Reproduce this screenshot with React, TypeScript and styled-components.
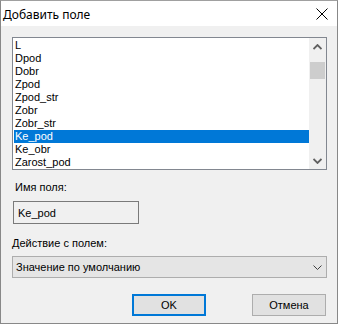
import React from "react";
import styled, { createGlobalStyle } from "styled-components";

const Global = createGlobalStyle`
  html, body { margin: 0; padding: 0; background: #ffffff; }
  body { font-family: "Liberation Sans", Arial, sans-serif; font-size: 11px; color: #000; }
  * { box-sizing: border-box; }
`;

const Window = styled.div`
  width: 338px;
  height: 324px;
  border: 1px solid #888888;
  border-top-color: #a0a0a0;
  display: flex;
  flex-direction: column;
  background: #f0f0f0;
`;

const TitleBar = styled.div`
  height: 25px;
  background: #ffffff;
  display: flex;
  align-items: center;
  justify-content: space-between;
  padding: 0 8px 0 2px;
  font-family: "Noto Sans", "Open Sans", sans-serif;
  font-size: 12px;
  color: #000;
`;

const TitleText = styled.span`
  margin-top: 1px;
`;

const CloseBtn = styled.span`
  display: flex;
  width: 14px;
  height: 14px;
  align-items: center;
  justify-content: center;
`;

const Body = styled.div`
  flex: 1;
  display: flex;
  flex-direction: column;
  padding: 11px 10px 0 11px;
`;

const ListBox = styled.div`
  height: 133px;
  border: 1px solid #828790;
  background: #ffffff;
  display: flex;
  padding-left: 1px;
`;

const Rows = styled.div`
  flex: 1;
  overflow: hidden;
  padding-top: 1px;
`;

const Row = styled.div<{ $sel?: boolean }>`
  height: 13px;
  line-height: 13px;
  padding-left: 1px;
  white-space: nowrap;
  background: ${(p) => (p.$sel ? "#0078d7" : "transparent")};
  color: ${(p) => (p.$sel ? "#ffffff" : "#000000")};
`;

const ScrollBar = styled.div`
  width: 17px;
  background: #f0f0f0;
  display: flex;
  flex-direction: column;
`;

const ArrowBtn = styled.div`
  height: 17px;
  display: flex;
  align-items: center;
  justify-content: center;
`;

const Track = styled.div`
  flex: 1;
  padding-top: 7px;
`;

const Thumb = styled.div`
  height: 17px;
  margin: 0 1px;
  background: #cdcdcd;
`;

const Label = styled.div<{ $indent?: number; $top: number }>`
  height: 13px;
  line-height: 13px;
  margin-top: ${(p) => p.$top}px;
  padding-left: ${(p) => p.$indent ?? 0}px;
`;

const Field = styled.div<{ $top: number }>`
  margin-top: ${(p) => p.$top}px;
`;

const TextBox = styled.div`
  width: 126px;
  height: 23px;
  margin-left: 1px;
  border: 1px solid #7a7a7a;
  background: #f0f0f0;
  display: flex;
  align-items: center;
  padding-left: 4px;
  padding-top: 1px;
`;

const Select = styled.div`
  height: 22px;
  border: 1px solid #adadad;
  background: #e5e5e5;
  display: flex;
  align-items: center;
  justify-content: space-between;
  padding: 0 4px 0 3px;
`;

const ButtonRow = styled.div`
  display: flex;
  justify-content: flex-end;
  gap: 46px;
  padding-right: 1px;
  margin-top: 16px;
`;

const Button = styled.div<{ $default?: boolean }>`
  width: 74px;
  height: 22px;
  background: #e1e1e1;
  border: ${(p) => (p.$default ? "2px solid #0078d7" : "1px solid #adadad")};
  display: flex;
  align-items: center;
  justify-content: center;
`;

const items = [
  "L",
  "Dpod",
  "Dobr",
  "Zpod",
  "Zpod_str",
  "Zobr",
  "Zobr_str",
  "Ke_pod",
  "Ke_obr",
  "Zarost_pod",
];

const Chevron = ({ up }: { up?: boolean }) => (
  <svg width="9" height="6" viewBox="0 0 9 6">
    <path
      d={up ? "M0.5 5 L4.5 1 L8.5 5" : "M0.5 1 L4.5 5 L8.5 1"}
      fill="none"
      stroke="#606060"
      strokeWidth="1.8"
    />
  </svg>
);

export default function App() {
  return (
    <>
      <Global />
      <Window>
        <TitleBar>
          <TitleText>Добавить поле</TitleText>
          <CloseBtn>
            <svg width="12" height="12" viewBox="0 0 12 12">
              <path d="M0.5 0.5 L11.5 11.5 M11.5 0.5 L0.5 11.5" stroke="#000" strokeWidth="1" />
            </svg>
          </CloseBtn>
        </TitleBar>
        <Body>
          <ListBox>
            <Rows>
              {items.map((it) => (
                <Row key={it} $sel={it === "Ke_pod"}>
                  {it}
                </Row>
              ))}
            </Rows>
            <ScrollBar>
              <ArrowBtn>
                <Chevron up />
              </ArrowBtn>
              <Track>
                <Thumb />
              </Track>
              <ArrowBtn>
                <Chevron />
              </ArrowBtn>
            </ScrollBar>
          </ListBox>
          <Label $indent={3} $top={11}>Имя поля:</Label>
          <Field $top={7}>
            <TextBox>Ke_pod</TextBox>
          </Field>
          <Label $top={13}>Действие с полем:</Label>
          <Field $top={6}>
            <Select>
              <span>Значение по умолчанию</span>
              <svg width="9" height="5" viewBox="0 0 9 5">
                <path d="M0.5 0.5 L4.5 4.5 L8.5 0.5" fill="none" stroke="#404040" strokeWidth="1" />
              </svg>
            </Select>
          </Field>
          <ButtonRow>
            <Button $default>OK</Button>
            <Button>Отмена</Button>
          </ButtonRow>
        </Body>
      </Window>
    </>
  );
}
